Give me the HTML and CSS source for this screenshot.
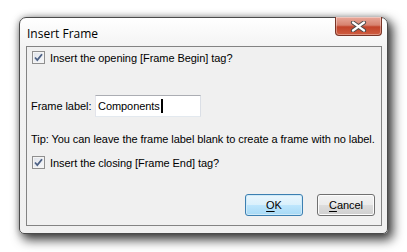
FILE: index.html
```html
<!DOCTYPE html>
<html>
<head>
<meta charset="utf-8">
<link rel="stylesheet" href="styles.css">
</head>
<body>
<div class="stage">
  <div class="window">
    <div class="titlebar">
      <span class="title">Insert Frame</span>
      <div class="close">
        <svg width="17" height="11" viewBox="0 0 17 11">
          <path d="M3 1.5 L8.5 5.5 L14 1.5 M3 9.5 L8.5 5.5 L14 9.5" fill="none" stroke="#4a4a4a" stroke-width="4.2" stroke-linecap="round"/>
          <path d="M3 1.5 L8.5 5.5 L14 1.5 M3 9.5 L8.5 5.5 L14 9.5" fill="none" stroke="#ffffff" stroke-width="2.2" stroke-linecap="round"/>
        </svg>
      </div>
    </div>
    <div class="client">
      <label class="check-row first">
        <span class="box"><svg width="13" height="13" viewBox="0 0 13 13"><path d="M3 6.5 L5.3 9 L10 3.2" fill="none" stroke="#4d6185" stroke-width="1.8"/></svg></span>
        <span>Insert the opening [Frame Begin] tag?</span>
      </label>
      <div class="field-row">
        <span class="field-label">Frame label:</span>
        <div class="input"><span>Components</span><span class="caret"></span></div>
      </div>
      <p class="tip">Tip: You can leave the frame label blank to create a frame with no label.</p>
      <label class="check-row second">
        <span class="box"><svg width="13" height="13" viewBox="0 0 13 13"><path d="M3 6.5 L5.3 9 L10 3.2" fill="none" stroke="#4d6185" stroke-width="1.8"/></svg></span>
        <span>Insert the closing [Frame End] tag?</span>
      </label>
      <div class="buttons">
        <div class="btn default"><u>O</u>K</div>
        <div class="btn"><u>C</u>ancel</div>
      </div>
    </div>
  </div>
</div>
</body>
</html>
```
FILE: styles.css
```css
html, body {
  margin: 0;
  padding: 0;
  background: #ffffff;
}
body {
  width: 407px;
  height: 252px;
  overflow: hidden;
  font-family: "Liberation Sans", Arial, sans-serif;
  font-size: 11px;
  letter-spacing: -0.06px;
  color: #000;
}
.stage {
  padding: 17px 0 0 19px;
}
.window {
  box-sizing: border-box;
  width: 369px;
  height: 217px;
  border: 1px solid #4b4b4b;
  border-radius: 7px 7px 5px 5px;
  background: linear-gradient(#ffffff, #f3f3f3 30px, #f0f0f0);
  padding: 0 5px 7px 6px;
  display: flex;
  flex-direction: column;
  box-shadow: 4px 5px 11px 1px rgba(0,0,0,0.75), 0 0 6px rgba(0,0,0,0.25);
}
.titlebar {
  height: 28px;
  display: flex;
  align-items: flex-start;
}
.title {
  font-family: "Open Sans", "Liberation Sans", sans-serif;
  font-size: 12px;
  letter-spacing: 0;
  padding: 7px 0 0 1px;
  color: #000;
}
.close {
  margin-left: auto;
  margin-top: -1px;
  width: 47px;
  height: 19px;
  box-sizing: border-box;
  border: 1px solid #7a3426;
  border-top: none;
  border-radius: 0 0 4px 4px;
  background: linear-gradient(#e9a99b, #d7826f 45%, #c2432a 55%, #cf5d40);
  box-shadow: inset 0 0 0 1px rgba(255,255,255,0.35);
  display: flex;
  align-items: center;
  justify-content: center;
}
.client {
  flex: 1;
  border: 1px solid #838383;
  background: #f0f0f0;
  display: flex;
  flex-direction: column;
}
.check-row {
  display: flex;
  align-items: center;
  gap: 5px;
  padding-left: 5px;
  height: 13px;
}
.check-row.first {
  margin-top: 4px;
}
.check-row.second {
  margin-top: 10px;
}
.box {
  width: 13px;
  height: 13px;
  box-sizing: border-box;
  border: 1px solid #8f8f8f;
  background: linear-gradient(135deg, #dfe3ea, #f7f8fa);
  display: flex;
  align-items: center;
  justify-content: center;
  box-shadow: inset 0 0 0 1px #f4f4f4;
}
.box svg {
  margin: -1px;
}
.field-row {
  display: flex;
  align-items: center;
  margin-top: 31px;
  padding-left: 4px;
}
.field-label {
  width: 64px;
}
.input {
  box-sizing: border-box;
  width: 106px;
  height: 22px;
  background: #fff;
  border: 1px solid #abadb3;
  border-left-color: #e2e3ea;
  border-right-color: #dbdfe6;
  border-bottom-color: #e3e9ef;
  display: flex;
  align-items: center;
  padding-left: 2px;
}
.caret {
  width: 2px;
  height: 14px;
  background: #000;
  margin-left: 1px;
}
.tip {
  margin: 16px 0 0 4px;
  line-height: 13px;
}
.buttons {
  display: flex;
  justify-content: flex-end;
  gap: 14px;
  margin-top: auto;
  margin-bottom: 9px;
  padding-right: 6px;
}
.btn {
  box-sizing: border-box;
  width: 58px;
  height: 22px;
  border: 1px solid #707070;
  border-radius: 3px;
  background: linear-gradient(#f2f2f2, #ebebeb 50%, #dddddd 50%, #cfcfcf);
  box-shadow: inset 0 0 0 1px #fcfcfc;
  display: flex;
  align-items: center;
  justify-content: center;
}
.btn.default {
  border-color: #3c7fb1;
  background: linear-gradient(#eaf6fd, #d9f0fc 50%, #bee6fd 50%, #a7d9f5);
  box-shadow: inset 0 0 0 1px #cfeaf8;
}
.btn u {
  text-decoration: underline;
  text-underline-offset: 2px;
}
```
